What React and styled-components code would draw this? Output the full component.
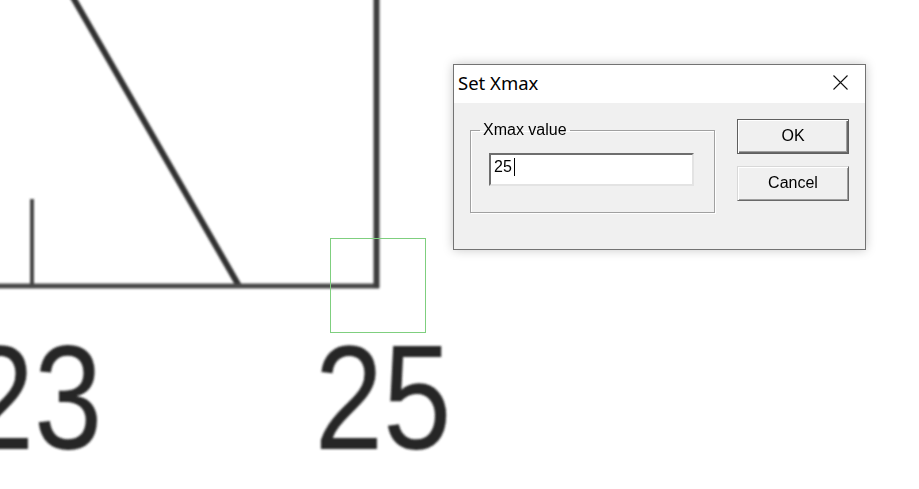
import React from 'react';
import styled, { createGlobalStyle } from 'styled-components';

const GlobalStyle = createGlobalStyle`
  html, body {
    margin: 0;
    padding: 0;
    background: #fff;
  }
`;

const Stage = styled.div`
  position: relative;
  width: 919px;
  height: 489px;
  overflow: hidden;
  background: #fff;
`;

const PlotSvg = styled.svg`
  display: block;
`;

const Dialog = styled.div`
  position: absolute;
  left: 453px;
  top: 64px;
  width: 413px;
  height: 186px;
  box-sizing: border-box;
  display: flex;
  flex-direction: column;
  background: #f0f0f0;
  border: 1px solid #737373;
  box-shadow: 0 0 10px rgba(0, 0, 0, 0.22);
  font-family: 'Liberation Sans', Arial, sans-serif;
  font-size: 16px;
  color: #000;
`;

const TitleBar = styled.div`
  height: 38px;
  flex: none;
  display: flex;
  align-items: center;
  justify-content: space-between;
  padding-left: 4px;
  background: #fff;
`;

const Title = styled.span`
  font-family: 'Noto Sans', 'Open Sans', sans-serif;
  font-size: 18.5px;
  line-height: 1;
  margin-top: -2px;
`;

const CloseButton = styled.div`
  width: 50px;
  height: 38px;
  display: flex;
  align-items: center;
  justify-content: center;
  margin-top: -3px;
`;

const Body = styled.div`
  flex: 1;
  display: flex;
  align-items: flex-start;
  gap: 22px;
  padding: 16px 16px 0 16px;
`;

const GroupBox = styled.fieldset`
  width: 245px;
  height: 92px;
  box-sizing: border-box;
  margin: 2px 0 0 0;
  padding: 14px 0 0 0;
  border: 1px solid #a0a0a0;
  box-shadow: 1px 1px 0 #fff, inset 1px 1px 0 #fff;
  min-width: 0;
`;

const GroupLabel = styled.legend`
  margin-left: 9px;
  padding: 0 3px;
  line-height: 18px;
`;

const TextBox = styled.div`
  width: 205px;
  height: 33px;
  box-sizing: border-box;
  display: flex;
  align-items: flex-start;
  margin-left: 18px;
  padding: 3px 2px 3px 3px;
  background: #fff;
  border: 2px solid;
  border-color: #6e6e6e #e3e3e3 #e3e3e3 #6e6e6e;
  line-height: 18px;
`;

const Caret = styled.span`
  display: inline-block;
  width: 1px;
  height: 18px;
  margin-left: 2px;
  background: #000;
`;

const ButtonColumn = styled.div`
  display: flex;
  flex-direction: column;
  gap: 12px;
`;

const Button = styled.div`
  width: 112px;
  height: 35px;
  box-sizing: border-box;
  display: flex;
  align-items: center;
  justify-content: center;
  background: #f0f0f0;
  border: 1px solid;
  border-color: ${p => (p.$default ? '#5f5f5f' : '#d8d8d8 #696969 #696969 #d8d8d8')};
  box-shadow: ${p =>
    p.$default
      ? 'inset 1px 1px 0 #fff, inset -1px -1px 0 #696969, inset -2px -2px 0 #a0a0a0'
      : 'inset 1px 1px 0 #fff, inset -1px -1px 0 #a0a0a0'};
  padding-bottom: 1px;
`;

const Plot = () => (
  <PlotSvg width="919" height="489" viewBox="0 0 919 489">
    <defs>
      <filter id="soft" x="-5%" y="-5%" width="110%" height="110%">
        <feGaussianBlur stdDeviation="0.8" />
      </filter>
    </defs>
    <g filter="url(#soft)">
      <line x1="71" y1="-6" x2="239" y2="286" stroke="#333" strokeWidth="6" />
      <line x1="-5" y1="286" x2="379" y2="286" stroke="#4a4a4a" strokeWidth="5" />
      <line x1="376.5" y1="-5" x2="376.5" y2="288" stroke="#3c3c3c" strokeWidth="6" />
      <line x1="32" y1="199" x2="32" y2="286" stroke="#444" strokeWidth="4" />
      <g fill="#262626" fontFamily="'Liberation Sans', Arial, sans-serif" fontSize="148">
        <text transform="translate(34 449) scale(0.83 1)" textAnchor="middle">23</text>
        <text transform="translate(383 449) scale(0.83 1)" textAnchor="middle">25</text>
      </g>
    </g>
    <rect x="330.5" y="238.5" width="95" height="94" fill="none" stroke="#7fcf7f" strokeWidth="1" />
  </PlotSvg>
);

export default function App() {
  return (
    <Stage>
      <GlobalStyle />
      <Plot />
      <Dialog>
        <TitleBar>
          <Title>Set Xmax</Title>
          <CloseButton>
            <svg width="15" height="15" viewBox="0 0 15 15">
              <path d="M0.5 0.5 L14.5 14.5 M14.5 0.5 L0.5 14.5" stroke="#111" strokeWidth="1.1" fill="none" />
            </svg>
          </CloseButton>
        </TitleBar>
        <Body>
          <GroupBox>
            <GroupLabel>Xmax value</GroupLabel>
            <TextBox>
              25<Caret />
            </TextBox>
          </GroupBox>
          <ButtonColumn>
            <Button $default>OK</Button>
            <Button>Cancel</Button>
          </ButtonColumn>
        </Body>
      </Dialog>
    </Stage>
  );
}
